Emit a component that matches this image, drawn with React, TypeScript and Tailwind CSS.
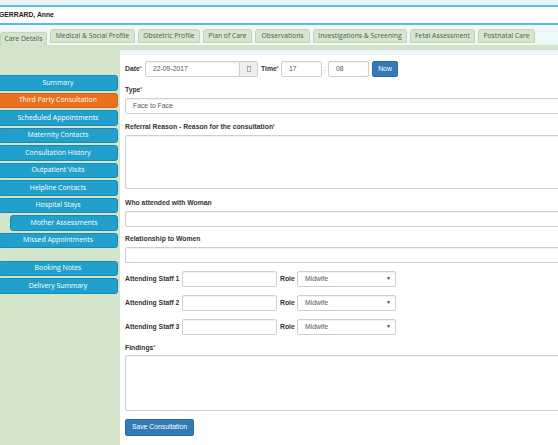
import React from "react";

const tabs = [
  { label: "Medical & Social Profile", w: "w-[85px]" },
  { label: "Obstetric Profile", w: "w-[62px]" },
  { label: "Plan of Care", w: "w-[49px]" },
  { label: "Observations", w: "w-[55px]" },
  { label: "Investigations & Screening", w: "w-[94px]" },
  { label: "Fetal Assessment", w: "w-[65px]" },
  { label: "Postnatal Care", w: "w-[57px]" },
];

const side1 = [
  "Summary",
  "Third Party Consultation",
  "Scheduled Appointments",
  "Maternity Contacts",
  "Consultation History",
  "Outpatient Visits",
  "Helpline Contacts",
  "Hospital Stays",
  "Mother Assessments",
  "Missed Appointments",
];

function SideBtn({ label }: { label: string }) {
  const active = label === "Third Party Consultation";
  const indent = label === "Mother Assessments";
  return (
    <div
      className={`h-[15.5px] flex items-center justify-center rounded-[3px] border text-white text-[6.9px] whitespace-nowrap ${
        indent ? "ml-[10px]" : "ml-[-2px]"
      } ${
        active
          ? "bg-[#e8711e] border-[#cf6214]"
          : "bg-[#20a0ca] border-[#1a8ab0]"
      }`}
      style={{ fontFamily: "'Open Sans', sans-serif" }}
    >
      {label}
    </div>
  );
}

function Label({ text, req }: { text: string; req?: boolean }) {
  return (
    <div className="h-[8px] leading-[8px] text-[6.8px] font-bold text-[#333] whitespace-nowrap">
      {text}
      {req && <span className="text-[#e0312c] text-[5px] align-top relative top-[-1px]">*</span>}
    </div>
  );
}

function Input({ className = "", children }: { className?: string; children?: React.ReactNode }) {
  return (
    <div
      className={`border border-[#cfcfcf] rounded-[2px] bg-white shadow-[inset_0_1px_1px_rgba(0,0,0,0.06)] flex items-center px-[7px] text-[6.8px] text-[#555] shrink-0 ${className}`}
    >
      {children}
    </div>
  );
}

function StaffRow({ n }: { n: number }) {
  return (
    <div className="flex items-center h-[16px] mt-[8px]">
      <div className="w-[57px] text-[6.8px] font-bold text-[#333] whitespace-nowrap">Attending Staff {n}</div>
      <Input className="w-[95px] h-[16px]" />
      <div className="w-[17px] ml-[3px] text-[6.8px] font-bold text-[#333]">Role</div>
      <Input className="w-[99px] h-[16px] justify-between text-[#8a8a8a]">
        <span>Midwife</span>
        <span className="text-[5px] text-[#444] mr-[-3px]">▼</span>
      </Input>
    </div>
  );
}

export default function App() {
  return (
    <div
      className="w-[558px] h-[445px] overflow-hidden bg-white flex flex-col"
      style={{ fontFamily: "'Liberation Sans', Arial, sans-serif" }}
    >
      {/* header */}
      <div className="h-[5px] bg-[#eaf5f9] shrink-0" />
      <div className="h-[2px] bg-[#5cbfd9] shrink-0" />
      <div className="h-[15.5px] flex items-center shrink-0">
        <span className="ml-[-1px] text-[6.8px] font-bold text-[#222]">GERRARD, Anne</span>
      </div>
      <div className="h-[2px] bg-[#5cbfd9] shrink-0" />
      {/* tabs */}
      <div
        className="h-[20.5px] bg-[#eef7fa] flex gap-[3px] shrink-0 text-[6.8px] text-[#555]"
        style={{ fontFamily: "'Open Sans', sans-serif" }}
      >
        <div className="w-[47px] h-[13.5px] self-end bg-[#d3e6cb] border border-b-0 border-[#c2d9b8] rounded-t-[3px] flex items-center justify-center whitespace-nowrap">
          Care Details
        </div>
        {tabs.map((t) => (
          <div
            key={t.label}
            className={`${t.w} h-[14px] mt-[4.5px] bg-[#d4e6cc] border border-[#bfd6b5] rounded-t-[3px] flex items-center justify-center whitespace-nowrap`}
          >
            {t.label}
          </div>
        ))}
      </div>
      <div className="h-[5px] bg-[#d2e5cb] shrink-0" />
      {/* body */}
      <div className="flex flex-1 min-h-0">
        <div className="w-[120px] shrink-0 bg-[#d2e5cb] pt-[25px] pr-[2px] flex flex-col">
          <div className="flex flex-col gap-[2px]">
            {side1.map((s) => (
              <SideBtn key={s} label={s} />
            ))}
          </div>
          <div className="flex flex-col gap-[2px] mt-[12.5px]">
            <SideBtn label="Booking Notes" />
            <SideBtn label="Delivery Summary" />
          </div>
        </div>
        <div className="flex-1 min-w-0 overflow-hidden flex flex-col">
          <div className="h-[5px] bg-[#eef7fa] shrink-0" />
          <div className="pl-[5px] flex flex-col">
            {/* date row */}
            <div className="flex items-center h-[16px] mt-[6px]">
              <div className="w-[20px]">
                <Label text="Date" req />
              </div>
              <Input className="w-[95px] h-[16px] rounded-r-none">22-09-2017</Input>
              <div className="w-[18px] h-[16px] bg-[#eeeeee] border border-l-0 border-[#cfcfcf] rounded-r-[2px] flex items-center justify-center">
                <svg width="4" height="6" viewBox="0 0 4 6">
                  <rect x="0.5" y="0.5" width="3" height="5" fill="none" stroke="#999" strokeWidth="0.8" />
                </svg>
              </div>
              <div className="w-[20px] ml-[3px]">
                <Label text="Time" req />
              </div>
              <Input className="w-[41px] h-[16px]">17</Input>
              <div className="w-[6px] text-center text-[6.8px] text-[#777]">:</div>
              <Input className="w-[41px] h-[16px]">08</Input>
              <div className="ml-[3px] w-[26px] h-[16.5px] bg-[#337ab7] border border-[#2e6da4] rounded-[2px] text-white text-[6.8px] flex items-center justify-center">
                Now
              </div>
            </div>

            <div className="mt-[9px]">
              <Label text="Type" req />
            </div>
            <Input className="mt-[4px] w-[440px] h-[16px]">Face to Face</Input>

            <div className="mt-[9px]">
              <Label text="Referral Reason - Reason for the consultation" req />
            </div>
            <Input className="mt-[4px] w-[440px] h-[54px]" />

            <div className="mt-[10px]">
              <Label text="Who attended with Woman" />
            </div>
            <Input className="mt-[4px] w-[440px] h-[16px]" />

            <div className="mt-[8px]">
              <Label text="Relationship to Women" />
            </div>
            <Input className="mt-[4px] w-[440px] h-[16px]" />

            <StaffRow n={1} />
            <StaffRow n={2} />
            <StaffRow n={3} />

            <div className="mt-[9px]">
              <Label text="Findings" req />
            </div>
            <Input className="mt-[3px] w-[440px] h-[56px]" />

            <div className="mt-[8px] w-[69px] h-[16.5px] bg-[#337ab7] border border-[#2e6da4] rounded-[2px] text-white text-[6.8px] flex items-center justify-center whitespace-nowrap">
              Save Consultation
            </div>
          </div>
        </div>
      </div>
    </div>
  );
}
